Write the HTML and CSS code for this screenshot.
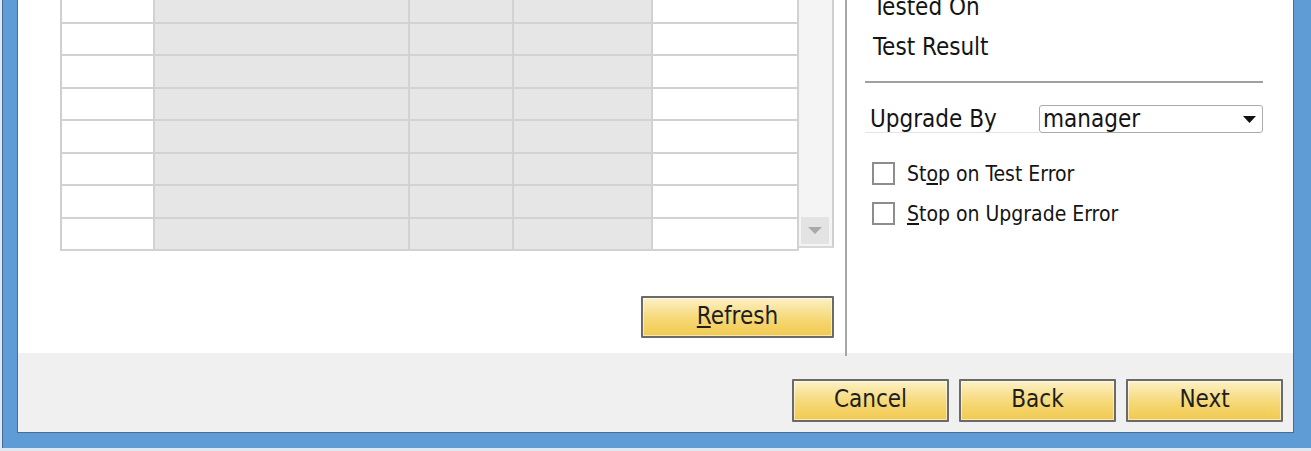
FILE: index.html
```html
<!DOCTYPE html>
<html>
<head>
<meta charset="utf-8">
<title>Upgrade</title>
<link rel="stylesheet" href="styles.css">
</head>
<body>
<div class="window">
  <div class="client">
    <div class="main">
      <div class="left">
        <div class="table-wrap">
          <div class="grid">
            <div class="cell"></div><div class="cell ro"></div><div class="cell ro"></div><div class="cell ro"></div><div class="cell"></div>
            <div class="cell"></div><div class="cell ro"></div><div class="cell ro"></div><div class="cell ro"></div><div class="cell"></div>
            <div class="cell"></div><div class="cell ro"></div><div class="cell ro"></div><div class="cell ro"></div><div class="cell"></div>
            <div class="cell"></div><div class="cell ro"></div><div class="cell ro"></div><div class="cell ro"></div><div class="cell"></div>
            <div class="cell"></div><div class="cell ro"></div><div class="cell ro"></div><div class="cell ro"></div><div class="cell"></div>
            <div class="cell"></div><div class="cell ro"></div><div class="cell ro"></div><div class="cell ro"></div><div class="cell"></div>
            <div class="cell"></div><div class="cell ro"></div><div class="cell ro"></div><div class="cell ro"></div><div class="cell"></div>
            <div class="cell"></div><div class="cell ro"></div><div class="cell ro"></div><div class="cell ro"></div><div class="cell"></div>
          </div>
          <div class="scrollbar">
            <div class="scroll-btn">
              <svg width="14" height="7" viewBox="0 0 14 7"><path d="M0 0 H14 L7 7 Z" fill="#a9a9a9"/></svg>
            </div>
          </div>
        </div>
        <div class="refresh-row">
          <button class="btn btn-refresh" type="button"><u>R</u>efresh</button>
        </div>
      </div>
      <div class="sep"></div>
      <div class="right">
        <div class="info">
          <div class="info-label">Tested On</div>
          <div class="info-label">Test Result</div>
        </div>
        <div class="rule"></div>
        <div class="field">
          <div class="field-label">Upgrade By</div>
          <div class="select">
            <span>manager</span>
            <svg class="caret" width="13" height="7" viewBox="0 0 13 7"><path d="M0 0 H13 L6.5 7 Z" fill="#111"/></svg>
          </div>
        </div>
        <div class="checks">
          <label class="check"><span class="box"></span><span>St<u>o</u>p on Test Error</span></label>
          <label class="check"><span class="box"></span><span><u>S</u>top on Upgrade Error</span></label>
        </div>
      </div>
    </div>
    <div class="footer">
      <button class="btn btn-foot" type="button">Cancel</button>
      <button class="btn btn-foot" type="button">Back</button>
      <button class="btn btn-foot" type="button">Next</button>
    </div>
  </div>
</div>
</body>
</html>
```

FILE: styles.css
```css
html, body {
  margin: 0;
  height: 451px;
  overflow: hidden;
}

body {
  box-sizing: border-box;
  padding: 0 0 3px 2px;
  background: #dfe7f0;
  font-family: "DejaVu Sans Condensed", "DejaVu Sans", sans-serif;
  font-stretch: condensed;
  color: #141414;
}

.window {
  height: 448px;
  box-sizing: border-box;
  background: #5f9bd4;
  border-left: 1px solid #3d6b9b;
  padding: 0 17px 15px 14px;
}

.client {
  height: 100%;
  box-sizing: border-box;
  border: 1px solid #41709f;
  border-top: 0;
  background: #fff;
  display: flex;
  flex-direction: column;
}

.main {
  height: 353px;
  flex: none;
  display: flex;
}

/* left pane */
.left {
  width: 827px;
  flex: none;
  box-sizing: border-box;
  padding: 0 11px 0 42px;
  display: flex;
  flex-direction: column;
}

.table-wrap {
  display: flex;
  align-items: flex-start;
  margin-top: -9px;
}

.grid {
  display: grid;
  grid-template-columns: 93px 255px 104px 139px 146px;
  grid-auto-rows: 32.5px;
  border-left: 2px solid #d0d0d0;
}

.cell {
  box-sizing: border-box;
  border-right: 2px solid #d2d2d2;
  border-bottom: 2px solid #d2d2d2;
  background: #fff;
}

.cell.ro {
  background: #e6e6e6;
}

.scrollbar {
  width: 35px;
  height: 257px;
  box-sizing: border-box;
  background: #f4f4f4;
  border-right: 2px solid #cfcfcf;
  border-bottom: 2px solid #d8d8d8;
  display: flex;
  flex-direction: column;
  justify-content: flex-end;
  align-items: center;
  padding: 0 2px 2px 0;
}

.scroll-btn {
  width: 28px;
  height: 27px;
  background: #e3e3e3;
  display: flex;
  align-items: center;
  justify-content: center;
}

.refresh-row {
  display: flex;
  justify-content: flex-end;
  margin-top: 45px;
}

/* buttons */
.btn {
  box-sizing: border-box;
  margin: 0;
  border: 2px solid #6a6a6a;
  border-radius: 1px;
  box-shadow: inset 0 0 0 1px rgba(255, 255, 255, 0.55);
  background: linear-gradient(to bottom, #fcf2c6 0%, #f9e39a 30%, #f5d670 60%, #f1ca52 100%);
  font-family: "DejaVu Sans Condensed", "DejaVu Sans", sans-serif;
  font-stretch: condensed;
  font-size: 24px;
  color: #1e1e1e;
  padding: 0 0 3px 0;
  line-height: 28px;
}

.btn-refresh {
  width: 193px;
  height: 42px;
}

.btn-foot {
  width: 157px;
  height: 43px;
}

/* separator */
.sep {
  width: 2px;
  height: 356px;
  flex: none;
  align-self: flex-start;
  background: #a6a6a6;
  position: relative;
  z-index: 1;
}

/* right pane */
.right {
  flex: 1;
  box-sizing: border-box;
  padding: 0 30px 0 18px;
  display: flex;
  flex-direction: column;
  font-size: 24px;
}

.info {
  margin-top: -13px;
  padding-left: 8px;
  line-height: 40px;
}

.rule {
  height: 2px;
  background: #a0a0a0;
  margin-top: 14px;
}

.field {
  display: flex;
  height: 28px;
  margin-top: 22px;
}

.field-label {
  width: 174px;
  flex: none;
  box-sizing: border-box;
  padding-left: 5px;
  line-height: 28px;
  border-bottom: 1px solid #e4e4e4;
}

.select {
  flex: 1;
  box-sizing: border-box;
  border: 1px solid #ababab;
  border-radius: 3px;
  line-height: 26px;
  padding: 0 6px 0 3px;
  display: flex;
  justify-content: space-between;
  align-items: center;
}

.checks {
  margin-top: 20.5px;
  display: flex;
  flex-direction: column;
}

.check {
  height: 40px;
  display: flex;
  align-items: center;
  gap: 12px;
  padding-left: 7px;
  font-size: 21px;
}

.box {
  width: 23px;
  height: 23px;
  box-sizing: border-box;
  border: 2px solid #8d8d8d;
  background: #fff;
  flex: none;
}

/* footer */
.footer {
  flex: 1;
  background: #f0f0f0;
  display: flex;
  justify-content: flex-end;
  align-items: flex-end;
  gap: 10px;
  padding: 0 10px 10px 0;
}
```
